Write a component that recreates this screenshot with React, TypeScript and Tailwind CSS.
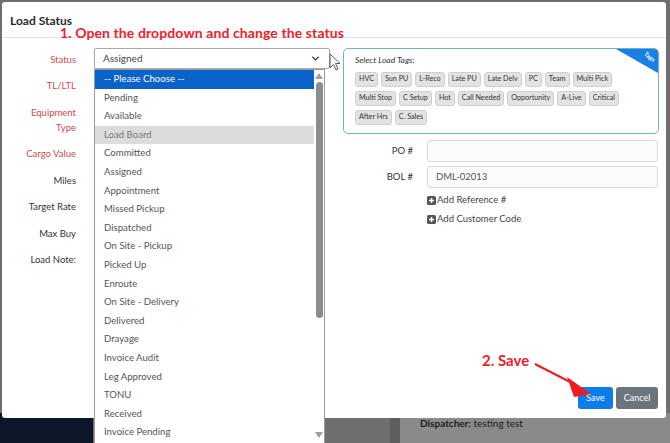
import { ChevronDown } from "lucide-react";

const statuses = [
  "-- Please Choose --",
  "Pending",
  "Available",
  "Load Board",
  "Committed",
  "Assigned",
  "Appointment",
  "Missed Pickup",
  "Dispatched",
  "On Site - Pickup",
  "Picked Up",
  "Enroute",
  "On Site - Delivery",
  "Delivered",
  "Drayage",
  "Invoice Audit",
  "Leg Approved",
  "TONU",
  "Received",
  "Invoice Pending",
];

const tagRows = [
  ["HVC", "Sun PU", "L-Reco", "Late PU", "Late Delv", "PC", "Team", "Multi Pick"],
  ["Multi Stop", "C Setup", "Hot", "Call Needed", "Opportunity", "A-Live", "Critical"],
  ["After Hrs", "C. Sales"],
];

const leftLabels: { text: string[]; red: boolean; h: string }[] = [
  { text: ["Status"], red: true, h: "h-[22px]" },
  { text: ["TL/LTL"], red: true, h: "h-[22px]" },
  { text: ["Equipment", "Type"], red: true, h: "h-[37px]" },
  { text: ["Cargo Value"], red: true, h: "h-[22px]" },
  { text: ["Miles"], red: false, h: "h-[22px]" },
  { text: ["Target Rate"], red: false, h: "h-[22px]" },
  { text: ["Max Buy"], red: false, h: "h-[22px]" },
  { text: ["Load Note:"], red: false, h: "h-[22px]" },
];

function PlusBox() {
  return (
    <svg width="9" height="9" viewBox="0 0 9 9" className="shrink-0">
      <rect x="0" y="0" width="9" height="9" rx="1.5" fill="#555" />
      <path d="M4.5 2v5M2 4.5h5" stroke="#fff" strokeWidth="1.5" />
    </svg>
  );
}

export default function App() {
  return (
    <div className="relative w-[670px] h-[443px] overflow-hidden bg-[#6f6f6f] font-['Lato',sans-serif]">
      {/* page behind the dimmed overlay */}
      <div className="absolute inset-x-0 bottom-0 h-[30px] flex">
        <div className="w-[93px] bg-[#0c1829]" />
        <div className="w-[297px] bg-[#6e6e6e]" />
        <div className="w-[10px] bg-[#5e5e5e]" />
        <div className="flex-1 bg-[#8a8a8a] pl-[20px] pt-[3px] text-[10px] text-[#1c1c1c]">
          <span className="font-bold">Dispatcher:</span> testing test
        </div>
      </div>

      {/* modal */}
      <div className="absolute left-[2px] top-[2px] w-[664px] h-[416px] bg-white rounded-[3px] flex flex-col">
        <div className="h-[36px] border-b border-[#e3e3e3] flex items-center px-[8px] pt-[2px]">
          <span className="text-[12px] font-bold text-[#2a2a2a]">Load Status</span>
        </div>

        <div className="flex-1 flex pt-[10px]">
          {/* left labels */}
          <div className="w-[74px] flex flex-col gap-[4.5px]">
            {leftLabels.map((l) => (
              <div
                key={l.text.join(" ")}
                className={`${l.h} flex flex-col items-end justify-center text-[9.5px] leading-[15px] ${
                  l.red ? "text-[#cf4a4a]" : "text-[#333]"
                }`}
              >
                {l.text.map((t) => (
                  <span key={t}>{t}</span>
                ))}
              </div>
            ))}
          </div>

          {/* left controls */}
          <div className="ml-[18px] w-[236px]">
            <div className="h-[21px] border border-[#a9a9a9] rounded-[2px] flex items-center justify-between px-[8px] text-[10px] text-[#444]">
              <span>Assigned</span>
              <ChevronDown className="w-[11px] h-[11px] text-[#333]" strokeWidth={3} />
            </div>
          </div>

          {/* right column */}
          <div className="ml-[13px] w-[316px]">
            <div className="relative h-[86px] border-[1.5px] border-[#6bb6c4] rounded-[5px] overflow-hidden px-[11px] pt-[5px]">
              <div className="text-[8.5px] italic text-[#333] mb-[5px]">Select Load Tags:</div>
              <div className="flex flex-col gap-[4px]">
                {tagRows.map((row, i) => (
                  <div key={i} className="flex gap-[3px]">
                    {row.map((t) => (
                      <span
                        key={t}
                        className="h-[15px] px-[3px] flex items-center bg-[#e3e3e3] border border-[#cfcfcf] rounded-[3px] text-[7.2px] text-[#333]"
                      >
                        {t}
                      </span>
                    ))}
                  </div>
                ))}
              </div>
              <div className="absolute right-0 top-0 w-[42px] h-[24px]">
                <svg width="42" height="24" className="absolute inset-0">
                  <polygon points="0,0 42,0 42,24" fill="#1a7fe2" />
                </svg>
                <span className="absolute right-[2px] top-[3px] rotate-[38deg] text-[6px] font-bold text-white">
                  Tags
                </span>
              </div>
            </div>

            <div className="mt-[6px] flex flex-col gap-[4px]">
              <div className="flex items-center">
                <span className="w-[70px] text-right text-[9.5px] text-[#333]">PO #</span>
                <div className="ml-[14px] w-[231px] h-[22px] border border-[#dadada] rounded-[3px] bg-[#fbfbfb]" />
              </div>
              <div className="flex items-center">
                <span className="w-[70px] text-right text-[9.5px] text-[#333]">BOL #</span>
                <div className="ml-[14px] w-[231px] h-[22px] border border-[#dadada] rounded-[3px] bg-[#fbfbfb] flex items-center px-[8px] text-[9.5px] text-[#555]">
                  DML-02013
                </div>
              </div>
            </div>
            <div className="ml-[84px] mt-[6px] flex flex-col gap-[6px] text-[9.5px] text-[#444]">
              <div className="flex items-center gap-[1px] h-[13px]">
                <PlusBox />
                <span>Add Reference #</span>
              </div>
              <div className="flex items-center gap-[1px] h-[13px]">
                <PlusBox />
                <span>Add Customer Code</span>
              </div>
            </div>
          </div>
        </div>

        <div className="flex justify-end gap-[3px] pr-[8px] pb-[9px]">
          <button className="w-[35px] h-[22px] rounded-[3px] bg-[#0b7de9] text-white text-[9px]">Save</button>
          <button className="w-[42px] h-[22px] rounded-[3px] bg-[#6c757d] text-white text-[9px]">Cancel</button>
        </div>
      </div>

      {/* open dropdown list */}
      <div className="absolute left-[94px] top-[69px] w-[231px] h-[380px] bg-white border border-[#9a9a9a] flex">
        <div className="flex-1">
          {statuses.map((s, i) => (
            <div
              key={s}
              className={`h-[18.6px] flex items-center px-[9px] text-[9.6px] ${
                i === 0 ? "bg-[#0b62c8] text-white" : i === 3 ? "bg-[#dcdcdc] text-[#777]" : "text-[#555]"
              }`}
            >
              {s}
            </div>
          ))}
        </div>
        <div className="w-[10px] flex flex-col items-center pt-[3px]">
          <svg width="8" height="6" viewBox="0 0 8 6">
            <polygon points="4,0 8,6 0,6" fill="#a0a0a0" />
          </svg>
          <div className="mt-[3px] w-[7px] h-[236px] rounded-[4px] bg-[#8c8c8c]" />
          <div className="flex-1" />
          <svg width="8" height="6" viewBox="0 0 8 6" className="mb-[10px]">
            <polygon points="0,0 8,0 4,6" fill="#a0a0a0" />
          </svg>
        </div>
      </div>

      {/* annotations */}
      <div className="absolute left-[60px] top-[22px] text-[14px] font-bold text-[#f0202a] tracking-[0.1px]">
        1. Open the dropdown and change the status
      </div>
      <div className="absolute left-[482px] top-[349px] text-[15px] font-bold text-[#f0202a]">2. Save</div>
      <svg className="absolute inset-0 pointer-events-none" width="670" height="443">
        <line x1="535" y1="364" x2="576" y2="385" stroke="#ef1c24" strokeWidth="2.2" />
        <polygon points="591,394 567,377 574,397" fill="#ef1c24" />
        <path
          d="M330 54 L330 68 L333.5 64.5 L336 70 L338 69 L335.5 63.5 L340 63.5 Z"
          fill="#fff"
          stroke="#333"
          strokeWidth="0.8"
        />
      </svg>
    </div>
  );
}
